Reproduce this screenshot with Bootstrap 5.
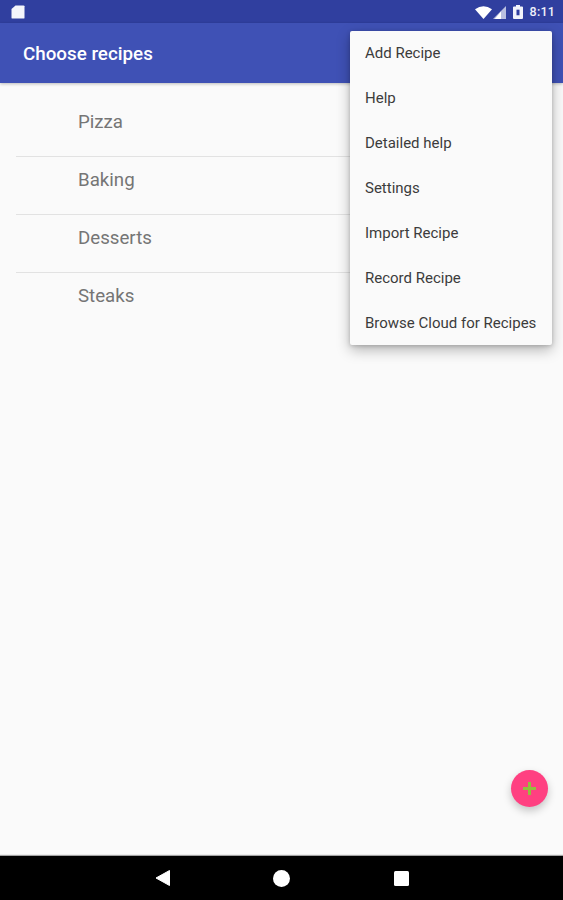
<!DOCTYPE html>
<html lang="en">
<head>
<meta charset="utf-8">
<title>Choose recipes</title>
<link rel="stylesheet" href="https://cdn.jsdelivr.net/npm/bootstrap@5.3.0/dist/css/bootstrap.min.css">
<style>
html, body { height: 100%; }
body { font-family: Roboto, "Liberation Sans", sans-serif; background: #fafafa; overflow: hidden; }
.app-shell { height: 900px; position: relative; }
.status-strip { height: 23px; background: #303f9f; color: #eef0fa; padding: 1px 8px 0 11px; }
.status-time { font-size: 12.5px; font-weight: 500; line-height: 1; letter-spacing: .2px; margin-left: 7px; }
.sig-icon { margin-left: 1px; }
.batt-icon { margin-left: 7px; }
.app-bar { height: 60px; background: #3f51b5; padding: 0 23px; box-shadow: 0 1px 3px rgba(0,0,0,.25); position: relative; }
.app-title { font-size: 18.8px; font-weight: 500; color: #fff; margin: 0; line-height: 1; position: relative; top: 1px; }
.page-body { background: #fafafa; }
.recipe-list { padding: 16px 16px 0; }
.recipe-item { height: 58px; padding: 0 0 0 62px; background: transparent; border: 0; border-bottom: 1px solid #e2e2e2; border-radius: 0; color: #757575; font-size: 18.7px; line-height: 47px; }
.recipe-item:last-child { border-bottom: 0; }
.overflow-menu.dropdown-menu { display: block; position: absolute; left: 350px; top: 31px; width: 202px; height: 314px; padding: 0; margin: 0; border: 0; border-radius: 2px; background: #fafafa; box-shadow: 0 5px 14px rgba(0,0,0,.28), 0 1px 4px rgba(0,0,0,.18); }
.overflow-menu .dropdown-item { height: 45px; line-height: 45px; padding: 0 0 0 15px; font-size: 15px; color: #3c3c3c; }
.fab-add { position: absolute; left: 511px; top: 770px; width: 37px; height: 37px; padding: 0; border: 0; border-radius: 50%; background: #ff4081; box-shadow: 0 4px 8px rgba(0,0,0,.22); }
.nav-strip { position: absolute; left: 0; right: 0; top: 856px; height: 44px; background: #000; box-shadow: 0 -1px 1px rgba(0,0,0,.35); }
.nav-icon { position: absolute; top: 14px; }
.nav-back { left: 155px; }
.nav-home { left: 273px; }
.nav-recent { left: 394px; top: 15px; }
</style>
</head>
<body>
<div class="app-shell">
  <div class="status-strip d-flex align-items-center justify-content-between">
    <svg width="14" height="14" viewBox="0 0 14 16" preserveAspectRatio="none" aria-hidden="true"><path d="M4.500 0.500H12.500a1 1 0 0 1 1 1v13a1 1 0 0 1-1 1H1.500a1 1 0 0 1-1-1V4.500z" fill="#f4f5fb"/></svg>
    <div class="d-flex align-items-center">
      <svg width="17" height="13" viewBox="0 0 18 13" preserveAspectRatio="none" aria-hidden="true"><path d="M0 3.200Q9-2.600 18 3.200L9 13z" fill="#fff"/></svg>
      <svg class="sig-icon" width="13" height="13" viewBox="0 0 13 13" aria-hidden="true"><path d="M13 0V13H0z" fill="#b9bfe0"/><path d="M8 5.500V13H1.800z" fill="#fff"/></svg>
      <svg class="batt-icon" width="10" height="14" viewBox="0 0 10 15" preserveAspectRatio="none" aria-hidden="true"><path d="M3 0h4v1.500h2a1 1 0 0 1 1 1V14a1 1 0 0 1-1 1H1a1 1 0 0 1-1-1V2.500a1 1 0 0 1 1-1h2z" fill="#f2f3fa"/><rect x="3.500" y="5" width="3" height="6" fill="#303f9f"/></svg>
      <span class="status-time">8:11</span>
    </div>
  </div>
  <div class="app-bar d-flex align-items-center">
    <h1 class="app-title">Choose recipes</h1>
  </div>
  <main class="page-body">
    <div class="list-group recipe-list">
      <div class="list-group-item recipe-item">Pizza</div>
      <div class="list-group-item recipe-item">Baking</div>
      <div class="list-group-item recipe-item">Desserts</div>
      <div class="list-group-item recipe-item">Steaks</div>
    </div>
  </main>
  <div class="dropdown-menu show overflow-menu">
    <a class="dropdown-item" href="#">Add Recipe</a>
    <a class="dropdown-item" href="#">Help</a>
    <a class="dropdown-item" href="#">Detailed help</a>
    <a class="dropdown-item" href="#">Settings</a>
    <a class="dropdown-item" href="#">Import Recipe</a>
    <a class="dropdown-item" href="#">Record Recipe</a>
    <a class="dropdown-item" href="#">Browse Cloud for Recipes</a>
  </div>
  <button class="btn fab-add d-flex align-items-center justify-content-center" type="button" aria-label="Add">
    <svg width="13" height="13" viewBox="0 0 13 13" aria-hidden="true"><path d="M5 0h3v5h5v3H8v5H5V8H0V5h5z" fill="#93bf3e"/></svg>
  </button>
  <div class="nav-strip">
    <svg class="nav-icon nav-back" width="15" height="16" viewBox="0 0 15 16" aria-hidden="true"><path d="M14.500 0.500V15.500L1 8z" fill="#fff" stroke="#fff" stroke-linejoin="round"/></svg>
    <svg class="nav-icon nav-home" width="17" height="17" viewBox="0 0 16 16" aria-hidden="true"><circle cx="8" cy="8" r="8" fill="#fff"/></svg>
    <svg class="nav-icon nav-recent" width="15" height="15" viewBox="0 0 15 15" aria-hidden="true"><rect width="15" height="15" rx="1.500" fill="#fff"/></svg>
  </div>
</div>
</body>
</html>
